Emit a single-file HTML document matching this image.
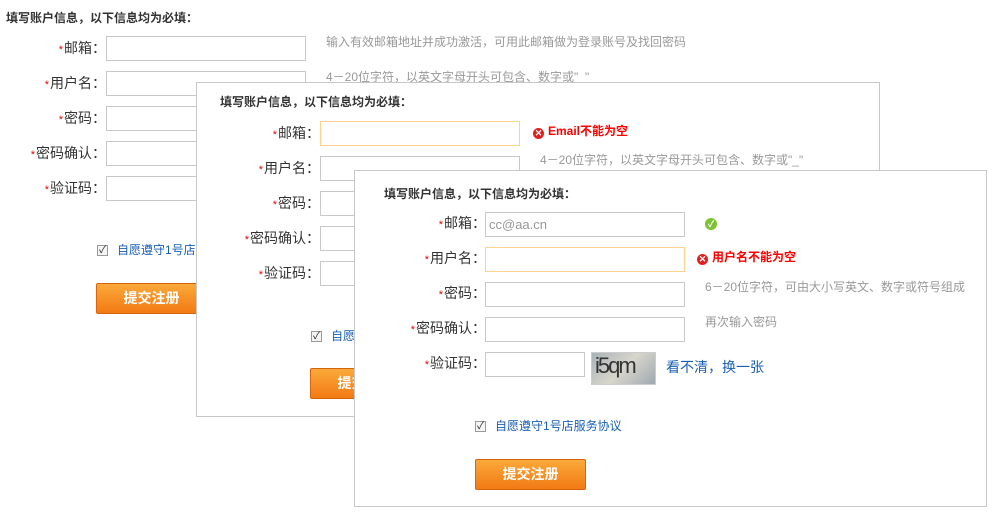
<!DOCTYPE html>
<html><head><meta charset="utf-8"><style>
*{margin:0;padding:0;box-sizing:border-box}
body{width:996px;height:518px;background:#fff;position:relative;overflow:hidden;font-family:"Liberation Sans","Noto Sans CJK SC",sans-serif;color:#333}
.panel{position:absolute;background:#fff;border:1px solid #c8c8c8}
.f{position:absolute;width:600px;height:300px}
.f>*{position:absolute;white-space:nowrap}
.t{font-size:12px;font-weight:bold;left:0;top:0;line-height:14px}
.l{font-size:14px;left:-20px;width:120px;text-align:right;line-height:25px}
.l b{color:#e00;font-weight:normal;font-size:11px;margin-right:1px}
.i{left:100px;width:200px;height:25px;border:1px solid #c9c9c9;background:#fff;font-size:13px;color:#999;padding-left:3px;line-height:23px}
.i.o{border-color:#fcd28c}
.h{left:320px;font-size:12px;color:#999;line-height:25px}
.e{font-size:12px;color:#f00;font-weight:bold;line-height:25px}
.e i{display:inline-block;width:11px;height:11px;border-radius:50%;background:#e02020;color:#fff;font-style:normal;font-size:9px;line-height:11px;text-align:center;vertical-align:-1px;margin-right:4px}
.cb{left:91px;width:11px;height:11px;border:1px solid #999;background:#f4f4f4;font-size:10px;line-height:9px;text-align:center;color:#222}
.ct{left:111px;font-size:12px;color:#1a5fb4;line-height:14px}
.btn{left:90px;width:111px;height:31px;border:1px solid #d8640e;border-radius:2px;background:linear-gradient(#fba93a,#f27a14);color:#fff;font-weight:bold;font-size:14px;text-align:center;line-height:29px}
</style></head><body>

<div class="f" style="left:6px;top:11px">
<div class="t">填写账户信息，以下信息均为必填：</div>
<div class="l" style="top:25px"><b>*</b>邮箱：</div><div class="i" style="top:25px"></div><div class="h" style="top:19px">输入有效邮箱地址并成功激活，可用此邮箱做为登录账号及找回密码</div>
<div class="l" style="top:60px"><b>*</b>用户名：</div><div class="i" style="top:60px"></div><div class="h" style="top:54px">4－20位字符，以英文字母开头可包含、数字或"_"</div>
<div class="l" style="top:95px"><b>*</b>密码：</div><div class="i" style="top:95px"></div>
<div class="l" style="top:130px"><b>*</b>密码确认：</div><div class="i" style="top:130px"></div>
<div class="l" style="top:165px"><b>*</b>验证码：</div><div class="i" style="top:165px;width:100px"></div>
<div class="cb" style="top:234px">✓</div><div class="ct" style="top:232px">自愿遵守1号店服务协议</div>
<div class="btn" style="top:272px">提交注册</div>
</div>

<div class="panel" style="left:196px;top:82px;width:684px;height:335px"></div>
<div class="f" style="left:220px;top:95px">
<div class="t">填写账户信息，以下信息均为必填：</div>
<div class="l" style="top:26px"><b>*</b>邮箱：</div><div class="i o" style="top:26px"></div><div class="e" style="left:313px;top:24px"><i>✕</i>Email不能为空</div>
<div class="l" style="top:61px"><b>*</b>用户名：</div><div class="i" style="top:61px"></div><div class="h" style="top:53px">4－20位字符，以英文字母开头可包含、数字或"_"</div>
<div class="l" style="top:96px"><b>*</b>密码：</div><div class="i" style="top:96px"></div>
<div class="l" style="top:131px"><b>*</b>密码确认：</div><div class="i" style="top:131px"></div>
<div class="l" style="top:166px"><b>*</b>验证码：</div><div class="i" style="top:166px;width:100px"></div>
<div class="cb" style="top:236px">✓</div><div class="ct" style="top:234px">自愿遵守1号店服务协议</div>
<div class="btn" style="top:273px">提交注册</div>
</div>

<div class="panel" style="left:354px;top:170px;width:633px;height:337px"></div>
<div class="f" style="left:384px;top:187px">
<div class="t">填写账户信息，以下信息均为必填：</div>
<div class="l" style="top:24px;left:-18px"><b>*</b>邮箱：</div><div class="i" style="top:25px;left:101px">cc@aa.cn</div>
<div style="left:321px;top:31px;width:12px;height:12px;border-radius:50%;background:#7cc232;color:#fff;font-size:9px;line-height:12px;text-align:center;font-weight:bold">✓</div>
<div class="l" style="top:59px;left:-18px"><b>*</b>用户名：</div><div class="i o" style="top:60px;left:101px"></div><div class="e" style="left:313px;top:58px"><i>✕</i>用户名不能为空</div>
<div class="l" style="top:94px;left:-18px"><b>*</b>密码：</div><div class="i" style="top:95px;left:101px"></div><div class="h" style="left:321px;top:88px">6－20位字符，可由大小写英文、数字或符号组成</div>
<div class="l" style="top:129px;left:-18px"><b>*</b>密码确认：</div><div class="i" style="top:130px;left:101px"></div><div class="h" style="left:321px;top:123px">再次输入密码</div>
<div class="l" style="top:164px;left:-18px"><b>*</b>验证码：</div><div class="i" style="top:165px;left:101px;width:100px"></div>
<div style="left:207px;top:165px;width:65px;height:33px;border:1px solid #ccc;background:linear-gradient(135deg,#a9b2b8,#d8d6cc 50%,#9fa8b0);font-family:'Liberation Sans',sans-serif;font-size:22px;color:#333;line-height:26px;padding-left:3px;letter-spacing:-2px">i5qm</div>
<div style="left:282px;top:172px;font-size:14px;color:#1a5fb4;line-height:16px">看不清，换一张</div>
<div class="cb" style="top:234px;left:91px">✓</div><div class="ct" style="top:232px">自愿遵守1号店服务协议</div>
<div class="btn" style="top:272px;left:91px">提交注册</div>
</div>
</body></html>
